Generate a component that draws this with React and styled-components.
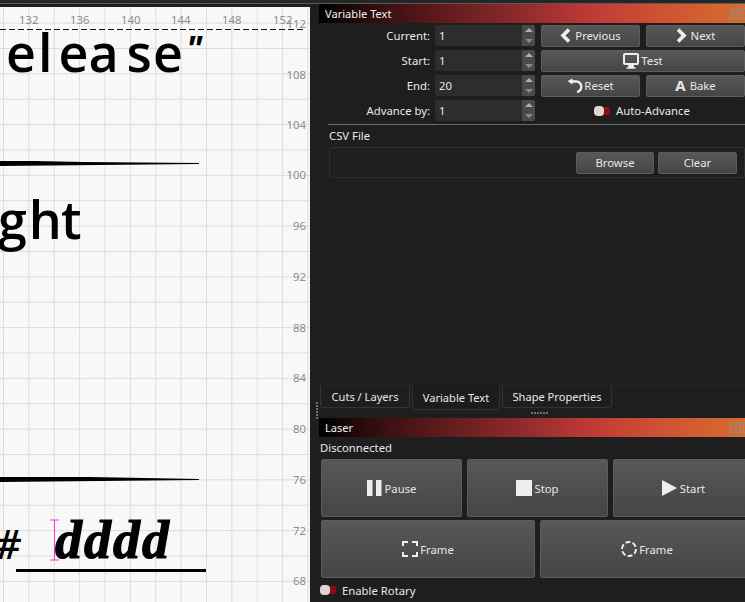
import React from 'react';
import styled, { createGlobalStyle } from 'styled-components';

const GlobalStyle = createGlobalStyle`
  html, body {
    margin: 0;
    padding: 0;
    background: #1e1e1e;
  }
  * {
    box-sizing: border-box;
  }
`;

const Window = styled.div`
  position: relative;
  width: 745px;
  height: 602px;
  overflow: hidden;
  display: flex;
  flex-direction: column;
  background: #1e1e1e;
  font-family: 'Noto Sans', 'Open Sans', sans-serif;
  font-size: 11.3px;
  color: #e8e8e8;
`;

const TopEdge = styled.div`
  height: 4px;
  flex: none;
  background: #262626;
  border-bottom: 1px solid #5a5a5a;
`;

const Main = styled.div`
  flex: 1;
  min-height: 0;
  display: flex;
`;

const Canvas = styled.div`
  position: relative;
  width: 310px;
  height: 595px;
  margin-top: 3px;
  overflow: hidden;
  background-color: #f8f8f8;
  background-image:
    linear-gradient(to right, #dcdcdc 1px, transparent 1px),
    linear-gradient(to bottom, #dcdcdc 1px, transparent 1px);
  background-size: 25.38px 25.38px;
  background-position: 3px 15.6px;
`;

const TopMark = styled.span`
  position: absolute;
  left: ${p => p.$x}px;
  top: 6px;
  line-height: 14px;
  color: #8d8a96;
`;

const SideMark = styled.span`
  position: absolute;
  right: 4px;
  top: ${p => p.$y}px;
  line-height: 14px;
  color: #8c8c8c;
`;

const DashLine = styled.div`
  position: absolute;
  left: 0;
  right: 5px;
  top: 22px;
  height: 1px;
  background: repeating-linear-gradient(to right, #111 0, #111 6px, transparent 6px, transparent 9px);
`;

const Word = styled.span`
  position: absolute;
  left: ${p => p.$x}px;
  top: ${p => p.$y}px;
  font-family: 'Open Sans', sans-serif;
  font-weight: 600;
  font-size: 52px;
  line-height: 60px;
  color: #000;
  white-space: nowrap;
`;

const Letter = styled.span`
  margin-left: ${p => p.$gap || 0}px;
`;

const Quote = styled(Letter)`
  font-style: italic;
  font-weight: 700;
  font-size: 36px;
  line-height: 0;
  vertical-align: 10px;
`;

const Stamp = styled(Word)`
  font-family: 'Liberation Serif', serif;
  font-weight: 700;
  font-style: italic;
  font-size: 54px;
  letter-spacing: 2px;
  -webkit-text-stroke: 1.2px #000;
`;

const Hash = styled(Word)`
  font-style: italic;
  font-weight: 600;
  font-size: 40px;
`;

const Stroke = styled.svg`
  position: absolute;
  left: 0;
  top: ${p => p.$y}px;
`;

const Rule = styled.div`
  position: absolute;
  left: 16px;
  top: 562px;
  width: 190px;
  height: 3px;
  background: #000;
`;

const Caret = styled.svg`
  position: absolute;
  left: 50px;
  top: 512px;
`;

const Side = styled.div`
  flex: 1;
  min-width: 0;
  display: flex;
  flex-direction: column;
  padding-left: 9px;
`;

const TitleBar = styled.div`
  height: 19px;
  flex: none;
  display: flex;
  align-items: center;
  justify-content: space-between;
  padding-left: 6px;
  font-size: 11.1px;
  color: #f0f0f0;
  background: linear-gradient(to right, #000 0%, #3a0f10 15%, #8f2a2c 47%, #c03a36 64%, #cf5532 82%, #d86c30 100%);
`;

const DockIcon = styled.svg`
  flex: none;
`;

const VariablePane = styled.div`
  flex: 1;
  display: flex;
  flex-direction: column;
  min-height: 0;
`;

const FormGrid = styled.div`
  display: grid;
  grid-template-columns: 110px 100px 99px 99px;
  grid-auto-rows: 25px;
  column-gap: 6px;
  align-items: center;
`;

const FieldLabel = styled.label`
  text-align: right;
  margin-right: -1px;
`;

const SpinBox = styled.div`
  height: 21px;
  display: flex;
  background: #2d2d2d;
  border-radius: 2px;
`;

const SpinValue = styled.span`
  flex: 1;
  padding-left: 4px;
  line-height: 21px;
`;

const SpinArrows = styled.div`
  width: 13px;
  display: flex;
  flex-direction: column;
  background: #4a4a4a;
  border-radius: 0 2px 2px 0;
`;

const SpinArrow = styled.span`
  flex: 1;
  display: flex;
  align-items: center;
  justify-content: center;
  &::before {
    content: '';
    border-left: 4px solid transparent;
    border-right: 4px solid transparent;
    ${p => p.$down
      ? 'border-top: 4px solid #8a8a8a;'
      : 'border-bottom: 4px solid #b0b0b0;'}
  }
`;

const Button = styled.div`
  height: ${p => p.$h || 22}px;
  display: flex;
  align-items: center;
  justify-content: center;
  gap: ${p => p.$gap ?? 2}px;
  border: 1px solid #5c5c5c;
  border-radius: 2px;
  background: linear-gradient(to bottom, #585858, #454545);
  grid-column: ${p => p.$span ? `span ${p.$span}` : 'auto'};
`;

const BoldGlyph = styled.b`
  font-size: 15px;
  line-height: 15px;
`;

const ToggleRow = styled.div`
  grid-column: span 2;
  display: flex;
  align-items: center;
  gap: 6px;
  padding-left: 53px;
`;

const Toggle = styled.span`
  position: relative;
  display: inline-block;
  flex: none;
  width: 16px;
  height: 8px;
  border-radius: 2px;
  background: #930b0b;
  &::before {
    content: '';
    position: absolute;
    left: 0;
    top: -1px;
    width: 10px;
    height: 10px;
    border-radius: 4px;
    background: #dcd6d6;
  }
`;

const Divider = styled.div`
  height: 1px;
  margin: 1px 0 0 9px;
  background: #6a6a6a;
`;

const GroupTitle = styled.div`
  padding: 2px 0 0 10px;
  line-height: 17px;
`;

const GroupBox = styled.div`
  height: 31px;
  margin: 3px 0 0 10px;
  display: flex;
  justify-content: flex-end;
  align-items: center;
  gap: 4px;
  padding-right: 7px;
  border: 1px solid #2e2e2e;
  border-radius: 2px;
`;

const SmallButton = styled(Button)`
  width: ${p => p.$w}px;
`;

const TabBar = styled.div`
  height: 25px;
  flex: none;
  display: flex;
  gap: 2px;
  padding-left: 1px;
  margin-top: auto;
  font-size: 11.1px;
  border-top: 1px solid #262626;
`;

const Tab = styled.div`
  width: ${p => p.$w}px;
  height: ${p => p.$active ? 25 : 22}px;
  margin-top: ${p => p.$active ? -1 : 0}px;
  display: flex;
  align-items: center;
  justify-content: center;
  border: 1px solid #333;
  border-top: none;
  border-radius: 0 0 3px 3px;
  background: ${p => p.$active ? '#1c1c1c' : '#1e1e1e'};
`;

const Splitter = styled.div`
  height: 8px;
  flex: none;
  display: flex;
  justify-content: center;
  align-items: center;
  gap: 1px;
  padding: 0 0 2px 14px;
`;

const GripDot = styled.span`
  width: 2px;
  height: 2px;
  background: #6e6e6e;
`;

const VerticalGrip = styled.div`
  position: absolute;
  left: 316px;
  top: 402px;
  display: flex;
  flex-direction: column;
  gap: 1px;
`;

const StatusLine = styled.div`
  height: 22px;
  flex: none;
  display: flex;
  align-items: center;
  padding: 0 0 2px 1px;
`;

const LaserGrid = styled.div`
  display: grid;
  grid-template-columns: repeat(3, 141px);
  column-gap: 5px;
  row-gap: 3px;
  padding-left: 2px;
  width: 440px;
`;

const FrameRow = styled.div`
  grid-column: 1 / -1;
  display: grid;
  grid-template-columns: 214px 214px;
  column-gap: 5px;
`;

const RotaryRow = styled.div`
  display: flex;
  align-items: center;
  gap: 6px;
  height: 24px;
  flex: none;
  padding-left: 1px;
`;

const Dock = () => (
  <DockIcon width="15" height="11" viewBox="0 0 15 11" fill="none" stroke="#8d8d8d">
    <rect x="0.5" y="0.5" width="10" height="10" rx="1" />
    <circle cx="5.5" cy="5.5" r="2.5" />
    <rect x="13.5" y="0.5" width="10" height="10" />
  </DockIcon>
);

const Spin = ({ value }) => (
  <SpinBox>
    <SpinValue>{value}</SpinValue>
    <SpinArrows>
      <SpinArrow />
      <SpinArrow $down />
    </SpinArrows>
  </SpinBox>
);

const rulerX = [[19, 132], [70, 136], [121, 140], [171, 144], [222, 148], [273, 152]];
const rulerY = [[10, 112], [61, 108], [111, 104], [161, 100], [212, 96], [263, 92], [314, 88], [364, 84], [415, 80], [466, 76], [517, 72], [567, 68]];

export default function App() {
  return (
    <>
      <GlobalStyle />
      <Window>
        <TopEdge />
        <Main>
          <Canvas>
            {rulerX.map(([x, n]) => <TopMark key={n} $x={x}>{n}</TopMark>)}
            {rulerY.map(([y, n]) => <SideMark key={n} $y={y}>{n}</SideMark>)}
            <DashLine />
            <Word $x={6} $y={15}>
              e<Letter $gap={2}>l</Letter><Letter $gap={6}>e</Letter><Letter>a</Letter><Letter $gap={8}>s</Letter><Letter $gap={1}>e</Letter><Quote $gap={3}>"</Quote>
            </Word>
            <Stroke $y={154} width="200" height="6" viewBox="0 0 200 6">
              <polygon points="0,0 35,0 85,1 199,2 199,3 0,5" fill="#000" />
            </Stroke>
            <Word $x={-2} $y={182}>
              g<Letter $gap={2}>h</Letter><Letter $gap={-1}>t</Letter>
            </Word>
            <Stroke $y={470} width="200" height="6" viewBox="0 0 200 6">
              <polygon points="0,0 90,0 199,2 199,3 0,5" fill="#000" />
            </Stroke>
            <Hash $x={-5} $y={507}>#</Hash>
            <Stamp $x={55} $y={503}>dddd</Stamp>
            <Caret width="10" height="42" viewBox="0 0 10 42" fill="none" stroke="#ff30e0">
              <path d="M0 1h9M4.5 1v40M0 41h9" />
            </Caret>
            <Rule />
          </Canvas>
          <Side>
            <TitleBar>Variable Text<Dock /></TitleBar>
            <VariablePane>
              <FormGrid>
                <FieldLabel>Current:</FieldLabel>
                <Spin value="1" />
                <Button $gap={4}>
                  <svg width="11" height="15" viewBox="0 0 11 15" fill="none" stroke="#eee" strokeWidth="3.6">
                    <path d="M9 1.5L3 7.5l6 6" />
                  </svg>
                  Previous
                </Button>
                <Button $gap={4}>
                  <svg width="11" height="15" viewBox="0 0 11 15" fill="none" stroke="#eee" strokeWidth="3.6">
                    <path d="M2 1.5l6 6-6 6" />
                  </svg>
                  Next
                </Button>
                <FieldLabel>Start:</FieldLabel>
                <Spin value="1" />
                <Button $span={2}>
                  <svg width="16" height="16" viewBox="0 0 16 16" fill="none" stroke="#eee" strokeWidth="2">
                    <rect x="1" y="1" width="14" height="10" rx="1" />
                    <path d="M6 12h4v2H6zM3.5 15h9" strokeWidth="1.6" fill="#eee" />
                  </svg>
                  Test
                </Button>
                <FieldLabel>End:</FieldLabel>
                <Spin value="20" />
                <Button $gap={1}>
                  <svg width="16" height="16" viewBox="0 0 16 16" fill="none" stroke="#eee" strokeWidth="2.4">
                    <path d="M3 3.5h5a5.3 5.3 0 0 1 2 10.5" />
                    <path d="M0.5 3l5-2.5v6z" fill="#eee" stroke="none" />
                  </svg>
                  Reset
                </Button>
                <Button $gap={4}><BoldGlyph>A</BoldGlyph>Bake</Button>
                <FieldLabel>Advance by:</FieldLabel>
                <Spin value="1" />
                <ToggleRow><Toggle />Auto-Advance</ToggleRow>
              </FormGrid>
              <Divider />
              <GroupTitle>CSV File</GroupTitle>
              <GroupBox>
                <SmallButton $w={78}>Browse</SmallButton>
                <SmallButton $w={79}>Clear</SmallButton>
              </GroupBox>
              <TabBar>
                <Tab $w={90}>Cuts / Layers</Tab>
                <Tab $w={88} $active>Variable Text</Tab>
                <Tab $w={110}>Shape Properties</Tab>
              </TabBar>
            </VariablePane>
            <Splitter>{[0, 1, 2, 3, 4, 5].map(i => <GripDot key={i} />)}</Splitter>
            <TitleBar>Laser<Dock /></TitleBar>
            <StatusLine>Disconnected</StatusLine>
            <LaserGrid>
              <Button $h={58} $gap={3}>
                <svg width="15" height="16" viewBox="0 0 15 16" fill="#eee"><rect width="5.5" height="16" x="0" /><rect width="5.5" height="16" x="9" /></svg>
                Pause
              </Button>
              <Button $h={58}>
                <svg width="16" height="16" viewBox="0 0 16 16" fill="#eee"><rect width="16" height="16" /></svg>
                Stop
              </Button>
              <Button $h={58} $gap={3}>
                <svg width="15" height="16" viewBox="0 0 15 16" fill="#eee"><path d="M0 0l15 8-15 8z" /></svg>
                Start
              </Button>
              <FrameRow>
                <Button $h={58}>
                  <svg width="16" height="16" viewBox="0 0 16 16" fill="none" stroke="#eee" strokeWidth="2"><path d="M1 5V1h5M10 1h5v4M15 11v4h-5M6 15H1v-4" /></svg>
                  Frame
                </Button>
                <Button $h={58}>
                  <svg width="16" height="16" viewBox="0 0 16 16" fill="none" stroke="#eee" strokeWidth="2"><circle cx="8" cy="8" r="7" strokeDasharray="5 2.3" /></svg>
                  Frame
                </Button>
              </FrameRow>
            </LaserGrid>
            <RotaryRow><Toggle />Enable Rotary</RotaryRow>
          </Side>
        </Main>
        <VerticalGrip>{[0, 1, 2, 3, 4, 5].map(i => <GripDot key={i} />)}</VerticalGrip>
      </Window>
    </>
  );
}
